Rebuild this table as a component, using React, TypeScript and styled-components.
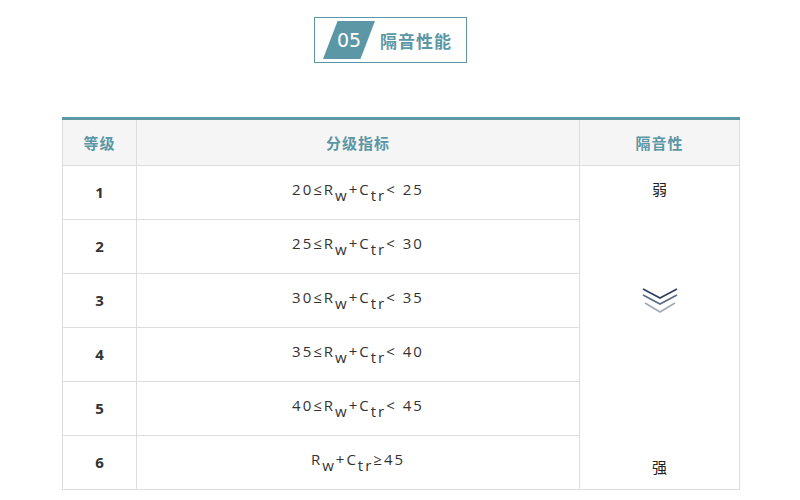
import styled, { createGlobalStyle } from "styled-components";

const TEAL = "#5b97a5";

const GlobalStyle = createGlobalStyle`
  body {
    margin: 0;
    background: #ffffff;
    font-family: "Noto Sans CJK SC", "Noto Sans", sans-serif;
  }
`;

const Page = styled.div`
  width: 800px;
  height: 500px;
  padding-top: 17px;
  box-sizing: border-box;
`;

const TitleRow = styled.div`
  display: flex;
  justify-content: center;
  padding-right: 19px;
`;

const TitleBox = styled.div`
  display: flex;
  align-items: center;
  gap: 5px;
  width: 153px;
  height: 46px;
  box-sizing: border-box;
  border: 1px solid ${TEAL};
  padding: 3px 0 3px 8px;
`;

const NumberTag = styled.div`
  width: 52px;
  height: 38px;
  background: ${TEAL};
  clip-path: polygon(28% 0, 100% 0, 72% 100%, 0 100%);
  color: #fff;
  font-family: "DejaVu Sans", sans-serif;
  font-size: 19px;
  display: flex;
  align-items: center;
  justify-content: center;
`;

const TitleText = styled.div`
  color: ${TEAL};
  font-size: 17px;
  font-weight: 700;
  letter-spacing: 1px;
`;

const Table = styled.table`
  margin: 54px 0 0 62px;
  width: 677px;
  border-collapse: collapse;
  border-top: 3px solid ${TEAL};
  table-layout: fixed;
`;

const Row = styled.tr<{ $h: number }>`
  height: ${({ $h }) => $h}px;
`;

const HeadCell = styled.th`
  background: #f5f5f5;
  color: ${TEAL};
  font-size: 15px;
  font-weight: 700;
  line-height: 20px;
  border: 1px solid #dddddd;
  border-top: none;
  padding: 0;
  letter-spacing: 1px;
`;

const LevelCell = styled.td`
  border: 1px solid #dddddd;
  text-align: center;
  font-family: "Open Sans", sans-serif;
  font-weight: 700;
  font-size: 15px;
  line-height: 20px;
  color: #333;
  padding: 0 0 2px;
`;

const FormulaCell = styled.td`
  border: 1px solid #dddddd;
  text-align: center;
  vertical-align: middle;
  padding: 0 0 8px;
  font-family: "Open Sans", sans-serif;
  font-size: 15px;
  line-height: 20px;
  color: #333;
  letter-spacing: 2px;
`;

const Sub = styled.span`
  position: relative;
  top: 6px;
  line-height: 0;
`;

const RatingCell = styled.td`
  border: 1px solid #dddddd;
  padding: 0;
  vertical-align: top;
`;

const RatingStack = styled.div`
  height: 320px;
  display: flex;
  flex-direction: column;
  align-items: center;
  padding: 13px 0 9px;
  box-sizing: border-box;
  font-size: 15px;
  line-height: 20px;
  color: #222;
`;

const ChevronWrap = styled.div`
  margin-top: 88px;
  line-height: 0;
`;

const Strong = styled.span`
  margin-top: auto;
`;

const rows = [
  { level: 1, lo: "20", hi: "25" },
  { level: 2, lo: "25", hi: "30" },
  { level: 3, lo: "30", hi: "35" },
  { level: 4, lo: "35", hi: "40" },
  { level: 5, lo: "40", hi: "45" },
];

function Chevrons() {
  return (
    <svg width="38" height="28" viewBox="0 0 38 28">
      <polyline points="2,2 19,11 36,2" fill="none" stroke="#2e3f62" strokeWidth="1.6" />
      <polyline points="2,8 19,17 36,8" fill="none" stroke="#5c6b85" strokeWidth="1.6" />
      <polyline points="4,16 19,25 34,16" fill="none" stroke="#a0a8b4" strokeWidth="1.6" />
    </svg>
  );
}

export default function App() {
  return (
    <Page>
      <GlobalStyle />
      <TitleRow>
        <TitleBox>
          <NumberTag>05</NumberTag>
          <TitleText>隔音性能</TitleText>
        </TitleBox>
      </TitleRow>
      <Table>
        <colgroup>
          <col style={{ width: 74 }} />
          <col style={{ width: 443 }} />
          <col style={{ width: 160 }} />
        </colgroup>
        <thead>
          <Row $h={47}>
            <HeadCell>等级</HeadCell>
            <HeadCell>分级指标</HeadCell>
            <HeadCell>隔音性</HeadCell>
          </Row>
        </thead>
        <tbody>
          {rows.map((r, i) => (
            <Row $h={54} key={r.level}>
              <LevelCell>{r.level}</LevelCell>
              <FormulaCell>
                {r.lo}≤R<Sub>w</Sub>+C<Sub>tr</Sub>&lt; {r.hi}
              </FormulaCell>
              {i === 0 && (
                <RatingCell rowSpan={6}>
                  <RatingStack>
                    <span>弱</span>
                    <ChevronWrap>
                      <Chevrons />
                    </ChevronWrap>
                    <Strong>强</Strong>
                  </RatingStack>
                </RatingCell>
              )}
            </Row>
          ))}
          <Row $h={54}>
            <LevelCell>6</LevelCell>
            <FormulaCell>
              R<Sub>w</Sub>+C<Sub>tr</Sub>≥45
            </FormulaCell>
          </Row>
        </tbody>
      </Table>
    </Page>
  );
}
